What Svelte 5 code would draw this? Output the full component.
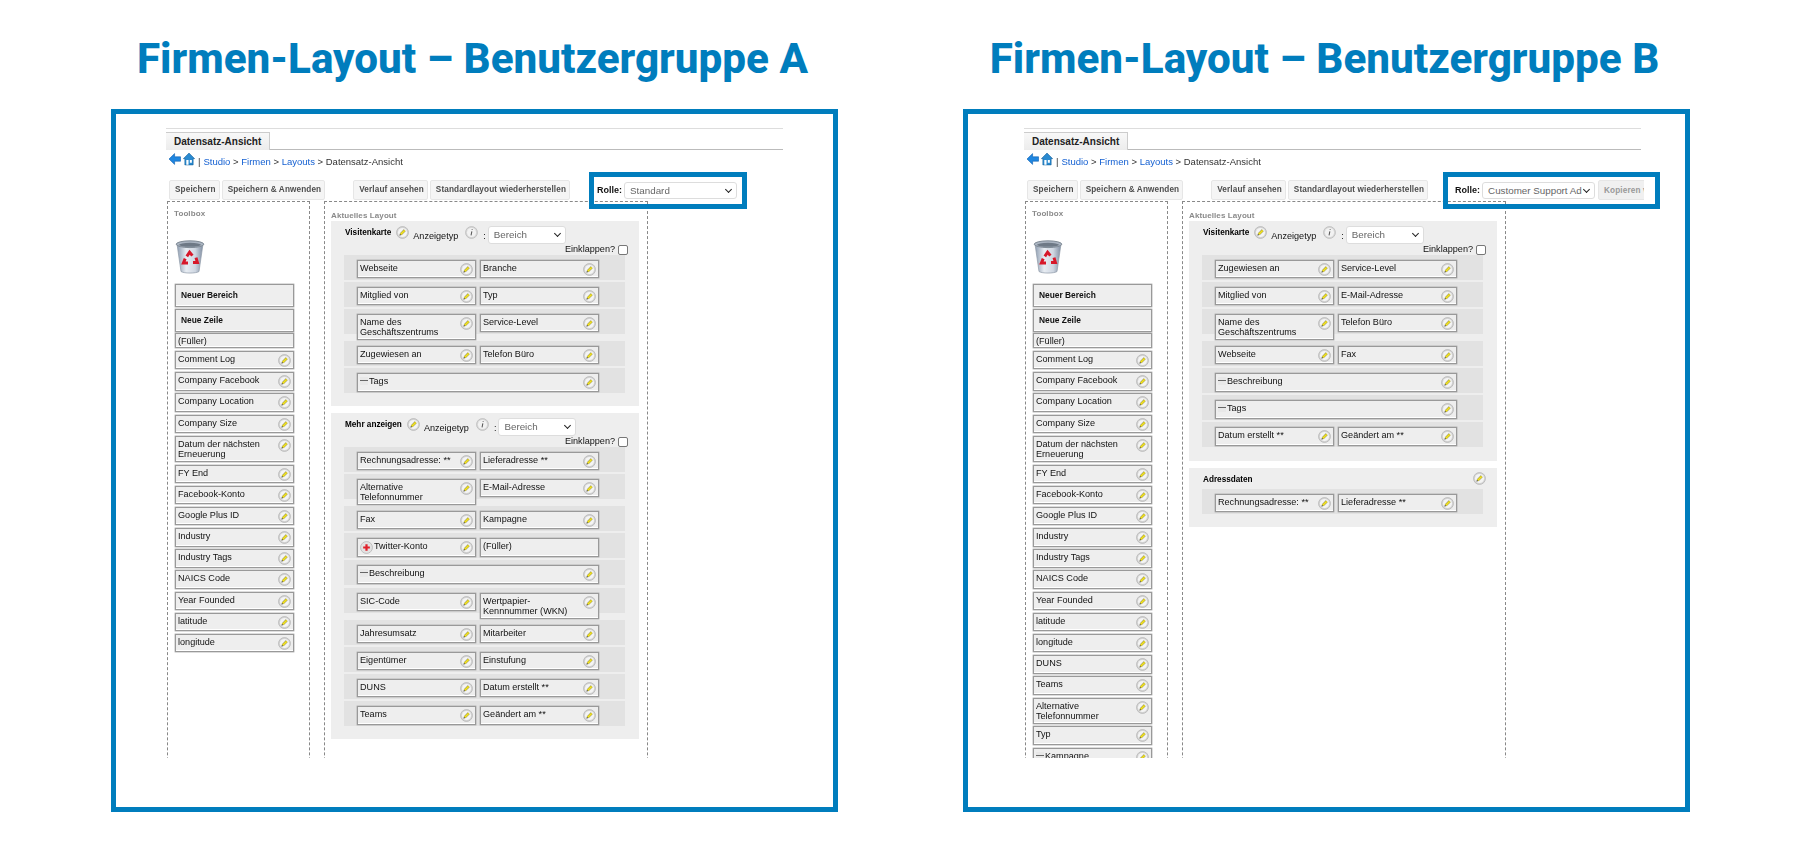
<script>
  const toolboxBase = [
    'Comment Log', 'Company Facebook', 'Company Location', 'Company Size',
    'Datum der nächsten Erneuerung', 'FY End', 'Facebook-Konto', 'Google Plus ID',
    'Industry', 'Industry Tags', 'NAICS Code', 'Year Founded', 'latitude', 'longitude'
  ];

  const f = (label, opts = {}) => ({ label, ...opts });

  const panels = [
    {
      id: 'a',
      heading: 'Firmen-Layout – Benutzergruppe A',
      role: 'Standard',
      toolbox: toolboxBase.map((label) => f(label)),
      sections: [
        {
          title: 'Visitenkarte',
          rows: [
            [f('Webseite'), f('Branche')],
            [f('Mitglied von'), f('Typ')],
            [f('Name des Geschäftszentrums'), f('Service-Level')],
            [f('Zugewiesen an'), f('Telefon Büro')],
            [f('Tags', { icon: 'minus' })]
          ]
        },
        {
          title: 'Mehr anzeigen',
          rows: [
            [f('Rechnungsadresse: **'), f('Lieferadresse **')],
            [f('Alternative Telefonnummer'), f('E-Mail-Adresse')],
            [f('Fax'), f('Kampagne')],
            [f('Twitter-Konto', { icon: 'plus' }), f('(Füller)', { noEdit: true })],
            [f('Beschreibung', { icon: 'minus' })],
            [f('SIC-Code'), f('Wertpapier-Kennnummer (WKN)')],
            [f('Jahresumsatz'), f('Mitarbeiter')],
            [f('Eigentümer'), f('Einstufung')],
            [f('DUNS'), f('Datum erstellt **')],
            [f('Teams'), f('Geändert am **')]
          ]
        }
      ]
    },
    {
      id: 'b',
      heading: 'Firmen-Layout – Benutzergruppe B',
      role: 'Customer Support Administrator',
      copy: true,
      toolbox: [
        ...toolboxBase.map((label) => f(label)),
        f('DUNS'), f('Teams'), f('Alternative Telefonnummer'), f('Typ'),
        f('Kampagne', { icon: 'minus' })
      ],
      sections: [
        {
          title: 'Visitenkarte',
          rows: [
            [f('Zugewiesen an'), f('Service-Level')],
            [f('Mitglied von'), f('E-Mail-Adresse')],
            [f('Name des Geschäftszentrums'), f('Telefon Büro')],
            [f('Webseite'), f('Fax')],
            [f('Beschreibung', { icon: 'minus' })],
            [f('Tags', { icon: 'minus' })],
            [f('Datum erstellt **'), f('Geändert am **')]
          ]
        },
        {
          title: 'Adressdaten',
          plain: true,
          rows: [[f('Rechnungsadresse: **'), f('Lieferadresse **')]]
        }
      ]
    }
  ];

  const isTall = (row) => row.some((c) => c.label.length > 24);
</script>

{#snippet pencil()}
  <svg class="pencil" viewBox="0 0 14 14" aria-hidden="true">
    <circle cx="7" cy="7" r="6.4" fill="#d4d4d4" stroke="#b8b8b8" stroke-width="0.9" />
    <circle cx="7" cy="7" r="4.9" fill="#f4f4f4" />
    <path d="M5 9 9.4 4.6" stroke="#8c8850" stroke-width="2.8" />
    <path d="M5 9 9.4 4.6" stroke="#f0e020" stroke-width="1.9" />
    <path d="M3.9 10.1 5 9" stroke="#45412c" stroke-width="1.2" />
  </svg>
{/snippet}

{#snippet info()}
  <svg class="info" viewBox="0 0 14 14" aria-hidden="true">
    <circle cx="7" cy="7" r="6.4" fill="#d8d8d8" stroke="#bdbdbd" stroke-width="0.9" />
    <circle cx="7" cy="7" r="4.9" fill="#f2f2f2" />
    <path d="M7.7 3.4v1M7.4 5.8 6.5 10.2" stroke="#555" stroke-width="1.1" fill="none" />
  </svg>
{/snippet}

{#snippet field(cell, wide)}
  <div class="field" class:wide class:tall={cell.label.length > 24}>
    {#if cell.icon === 'minus'}
      <span class="minus"></span>
    {:else if cell.icon === 'plus'}
      <svg class="plus" viewBox="0 0 14 14" aria-hidden="true">
        <circle cx="7" cy="7" r="6.4" fill="#e2e2e2" stroke="#b8b8b8" stroke-width="0.9" />
        <path d="M7 3.4v7.2M3.4 7h7.2" stroke="#e0202a" stroke-width="2.4" />
      </svg>
    {/if}
    <span class="label">{cell.label}</span>
    {#if !cell.noEdit}{@render pencil()}{/if}
  </div>
{/snippet}

<div class="page">
  {#each panels as panel}
    <section class="col {panel.id}">
      <h1>{panel.heading}</h1>
      <div class="frame">
        <div class="studio">
          <div class="tabs"><span class="tab">Datensatz-Ansicht</span></div>

          <div class="crumbs">
            <svg class="back" viewBox="0 0 13 12" aria-hidden="true">
              <path d="M6.6.6 1 6l5.6 5.4V8.2H12.6V3.8H6.6z" fill="#1f86e0" stroke="#0f5fb0" stroke-width="0.6" />
            </svg>
            <svg class="home" viewBox="0 0 13 14" aria-hidden="true">
              <path d="M6.5.6 .4 6.6H2V13.4H11V6.6H12.6z" fill="#2a8ad0" stroke="#0d5a96" stroke-width="0.6" />
              <path d="M3.6 8h2.4v5.2H3.6zM7.4 8h2.2v3H7.4z" fill="#fff" />
            </svg>
            <span class="sep">|</span>
            <a href="#studio">Studio</a> &gt; <a href="#firmen">Firmen</a> &gt; <a href="#layouts">Layouts</a> &gt; Datensatz-Ansicht
          </div>

          <div class="toolbar">
            <button>Speichern</button>
            <button>Speichern &amp; Anwenden</button>
            <button class="history">Verlauf ansehen</button>
            <button>Standardlayout wiederherstellen</button>
            <div class="role">
              <b>Rolle:</b>
              <span class="select"><span class="value">{panel.role}</span></span>
              {#if panel.copy}
                <div class="copy"><button>Kopieren von ...</button></div>
              {/if}
            </div>
          </div>

          <div class="columns">
            <div class="toolbox">
              <div class="caption">Toolbox</div>
              <svg class="trash" viewBox="0 0 30 34" aria-hidden="true">
                <defs>
                  <linearGradient id="can-{panel.id}" x1="0" x2="1" y1="0" y2="0">
                    <stop offset="0" stop-color="#8d9cb0" />
                    <stop offset="0.35" stop-color="#e8edf3" />
                    <stop offset="0.7" stop-color="#cfd7e2" />
                    <stop offset="1" stop-color="#7f8da1" />
                  </linearGradient>
                </defs>
                <path d="M2 4 6 31.5C9 33.6 21 33.6 24 31.5L28 4z" fill="url(#can-{panel.id})" stroke="#8e99a8" stroke-width="0.7" />
                <ellipse cx="15" cy="4.2" rx="13.8" ry="3.4" fill="#aab4c1" stroke="#78838f" stroke-width="0.9" />
                <ellipse cx="15" cy="4.8" rx="11" ry="2" fill="#6e7986" />
                <g fill="none" stroke="#d7182a" stroke-width="3">
                  <path d="M11.8 16.4 14.6 12.2 17.4 15.6" />
                  <path d="M21 17.6 22.4 22.4H18" />
                  <path d="M13 23H8.4L10.2 18.6" />
                </g>
              </svg>
              <div class="tool big"><b>Neuer Bereich</b></div>
              <div class="tool big"><b>Neue Zeile</b></div>
              <div class="tool filler">(Füller)</div>
              {#each panel.toolbox as item}
                <div class="tool" class:tall={item.label.length > 24}>
                  {#if item.icon === 'minus'}<span class="minus"></span>{/if}
                  <span class="label">{item.label}</span>
                  {@render pencil()}
                </div>
              {/each}
            </div>

            <div class="current">
              <div class="caption">Aktuelles Layout</div>
              {#each panel.sections as section}
                <div class="block">
                  {#if section.plain}
                    <div class="plain-head">
                      <b>{section.title}</b>
                      {@render pencil()}
                    </div>
                  {:else}
                    <div class="head">
                      <b>{section.title}</b>
                      {@render pencil()}
                      <span class="kind">Anzeigetyp</span>
                      {@render info()}
                      <span class="colon">:</span>
                      <span class="select"><span class="value">Bereich</span></span>
                      <label class="collapse">Einklappen?<input type="checkbox" /></label>
                    </div>
                  {/if}
                  {#each section.rows as row}
                    <div class="row" class:tall={isTall(row)}>
                      {#each row as cell}
                        {@render field(cell, row.length === 1)}
                      {/each}
                    </div>
                  {/each}
                </div>
              {/each}
            </div>
          </div>
        </div>
      </div>
    </section>
  {/each}
</div>

<style>
  :global(body) {
    margin: 0;
    background: #fff;
  }

  .page {
    display: flex;
    gap: 125px;
    width: 1800px;
    height: 863px;
    padding-left: 111px;
    box-sizing: border-box;
    overflow: hidden;
    font-family: "Liberation Sans", Arial, sans-serif;
    color: #111;
  }

  .col {
    width: 727px;
    flex: none;
  }

  h1 {
    margin: 0;
    height: 109px;
    box-sizing: border-box;
    padding: 35px 4px 0 0;
    text-align: center;
    font-family: Roboto, sans-serif;
    font-weight: 800;
    font-size: 42.2px;
    line-height: 48px;
    color: #007dbd;
    white-space: nowrap;
  }

  .frame {
    height: 703px;
    box-sizing: border-box;
    border: 5px solid #007dbd;
    padding: 14px 0 0 50px;
  }

  .b .frame {
    padding-left: 56px;
  }

  .studio {
    width: 617px;
    height: 630px;
    display: flex;
    flex-direction: column;
    filter: blur(0.25px);
  }

  .tabs {
    height: 22px;
    box-sizing: border-box;
    border-top: 1px solid #ddd;
    border-bottom: 1px solid #bbb;
    padding-top: 2px;
  }

  .tab {
    display: inline-block;
    height: 18px;
    box-sizing: border-box;
    padding: 3px 8px 0;
    border: 1px solid #ccc;
    border-bottom: 0;
    border-left: 0;
    background: linear-gradient(#f8f8f8, #ececec);
    font-size: 10px;
    font-weight: 700;
    line-height: 12px;
    color: #222;
  }

  .crumbs {
    height: 29px;
    display: flex;
    align-items: flex-start;
    padding: 6px 0 0 2px;
    box-sizing: border-box;
    font-size: 9.5px;
    line-height: 12px;
    color: #333;
    white-space: pre-wrap;
  }

  .crumbs a {
    color: #1460d2;
    text-decoration: none;
  }

  .back {
    width: 13px;
    height: 12px;
    margin-top: -3px;
  }

  .home {
    width: 12px;
    height: 14px;
    margin: -4px 0 0 2px;
  }

  .sep {
    margin: 0 3px 0 3px;
  }

  .toolbar {
    display: flex;
    align-items: center;
    gap: 2px;
    height: 21px;
    padding-left: 3px;
    position: relative;
    z-index: 1;
  }

  button {
    height: 20px;
    padding: 0 3px 0 5px;
    border: 1px solid #e6e6e6;
    border-radius: 2px;
    background: #f5f5f5;
    font-family: inherit;
    font-size: 8.2px;
    font-weight: 700;
    letter-spacing: 0.12px;
    color: #4d4d4d;
    white-space: nowrap;
    flex: none;
  }

  .history {
    margin-left: 26px;
  }

  .role {
    display: flex;
    flex: none;
    align-items: center;
    gap: 2px;
    height: 37px;
    width: 158px;
    box-sizing: border-box;
    margin: 0 0 -1px 17px;
    padding-left: 3px;
    border: 5px solid #007dbd;
    font-size: 9px;
  }

  .b .role {
    width: 217px;
    margin-left: 13px;
    padding-left: 7px;
  }

  .select {
    display: block;
    flex: none;
    box-sizing: border-box;
    height: 18px;
    padding: 0 12px 0 5px;
    border: 1px solid #ddd;
    border-radius: 3px;
    background: #fff;
    font-size: 9.8px;
    font-weight: 400;
    line-height: 16px;
    color: #666;
    white-space: nowrap;
    position: relative;
  }

  .select .value {
    display: block;
    overflow: hidden;
  }

  .select::after {
    content: "";
    position: absolute;
    right: 5px;
    top: 4px;
    width: 4px;
    height: 4px;
    border-right: 1.3px solid #222;
    border-bottom: 1.3px solid #222;
    transform: rotate(45deg);
  }

  .role .select {
    width: 113px;
    height: 17px;
    line-height: 15px;
  }

  .head .select {
    width: 78px;
  }

  .copy {
    width: 46px;
    flex: none;
    overflow: hidden;
    margin-left: 1px;
  }

  .copy button {
    color: #999;
    background: #f0f0f0;
  }

  .columns {
    flex: 1;
    min-height: 0;
    display: flex;
    align-items: flex-start;
    overflow: hidden;
    padding-left: 1px;
    margin-top: 1px;
  }

  .toolbox,
  .current {
    height: 800px;
    box-sizing: border-box;
    border: 1px dashed #888;
    flex: none;
  }

  .toolbox {
    width: 143px;
    padding: 6px 0 0 7px;
  }

  .current {
    width: 324px;
    margin-left: 14px;
    padding: 8px 0 0 6px;
  }

  .caption {
    font-size: 8px;
    font-weight: 700;
    line-height: 11px;
    color: #8a8a8a;
    letter-spacing: 0.1px;
  }

  .toolbox .caption {
    margin-left: -1px;
  }

  .trash {
    display: block;
    width: 30px;
    height: 34px;
    margin: 21px 0 10px 0;
  }

  .tool {
    display: flex;
    align-items: flex-start;
    justify-content: space-between;
    width: 118.5px;
    height: 18.4px;
    margin-bottom: 2.8px;
    padding: 2px 2px 0;
    box-sizing: border-box;
    border: 1px solid #999;
    box-shadow: inset 0 -1px 0 #fff, 0 0 0 0.4px #aaa;
    background: #eee;
    font-size: 9.1px;
    line-height: 10.5px;
  }

  .tool.tall {
    height: 26px;
  }

  .tool.big {
    height: 23px;
    margin-bottom: 1.5px;
    padding: 5px 5px 0;
    font-size: 8.4px;
  }

  .tool.filler {
    height: 15px;
    padding-top: 2px;
    margin-bottom: 3px;
  }

  .tool .label,
  .field .label {
    flex: 1;
    min-width: 0;
  }

  .pencil,
  .info {
    width: 13px;
    height: 13px;
    flex: none;
  }

  .block {
    width: 308px;
    box-sizing: border-box;
    background: #eee;
    padding: 0 14px 11px 13px;
    margin-bottom: 7px;
  }

  .head {
    position: relative;
    height: 33.5px;
    display: flex;
    align-items: flex-start;
    padding: 5px 0 0 1px;
    box-sizing: border-box;
    font-size: 9.1px;
  }

  .head b,
  .plain-head b {
    font-size: 8.2px;
    line-height: 12px;
    color: #000;
    margin-top: 1px;
  }

  .head .pencil {
    margin-left: 5px;
  }

  .kind {
    margin: 4px 7px 0 4px;
    line-height: 12px;
  }

  .colon {
    margin: 4px 2px 0 5px;
    line-height: 12px;
  }

  .collapse {
    position: absolute;
    right: -3px;
    top: 23px;
    display: flex;
    align-items: center;
    gap: 3px;
    line-height: 11px;
  }

  .collapse input {
    appearance: none;
    width: 10px;
    height: 10px;
    margin: 0;
    border: 1px solid #777;
    border-radius: 2px;
    background: #fff;
  }

  .plain-head {
    display: flex;
    justify-content: space-between;
    height: 21px;
    padding: 5px 0 0 1px;
    box-sizing: border-box;
  }

  .plain-head .pencil {
    margin-right: -3px;
    margin-top: -1px;
  }

  .row {
    display: flex;
    gap: 4px;
    height: 25px;
    margin-bottom: 2.2px;
    padding: 5px 0 0 13px;
    box-sizing: border-box;
    background: #e2e2e2;
  }

  .row.tall {
    margin-bottom: 7px;
  }

  .field {
    display: flex;
    align-items: flex-start;
    width: 119px;
    height: 18.5px;
    padding: 2px 2px 0;
    box-sizing: border-box;
    border: 1px solid #999;
    box-shadow: inset 0 -1px 0 #fff, 0 0 0 0.4px #aaa;
    background: #eee;
    font-size: 9.1px;
    line-height: 10.5px;
    position: relative;
  }

  .field.wide {
    width: 242px;
  }

  .field.tall {
    height: 26px;
  }

  .minus {
    flex: none;
    width: 8px;
    height: 8px;
    margin: 1px 1px 0 0;
    background: linear-gradient(#e8e8e8 3px, #666 3px, #666 4px, #e8e8e8 4px);
  }

  .plus {
    flex: none;
    width: 13px;
    height: 13px;
    margin: 0 1px 0 0;
  }
</style>
